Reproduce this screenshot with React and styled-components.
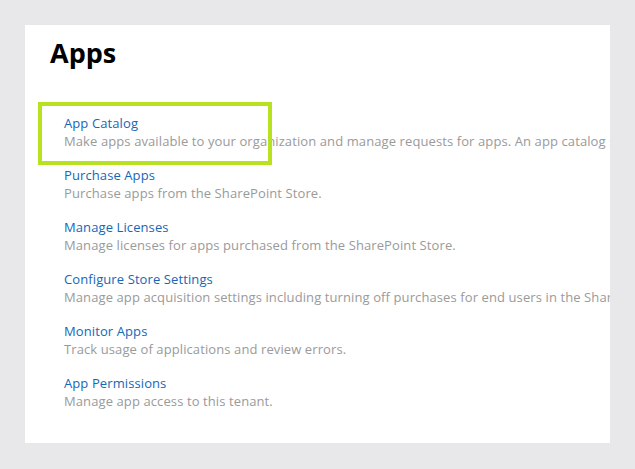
import { createGlobalStyle, styled } from "styled-components";

const Global = createGlobalStyle`
  body { margin: 0; background: #e8e8ea; font-family: "Open Sans", "Liberation Sans", sans-serif; }
`;

const Page = styled.div`
  padding: 25px 25px 26px 25px;
  height: 469px;
  box-sizing: border-box;
`;

const Panel = styled.div`
  position: relative;
  background: #fff;
  height: 418px;
  overflow: hidden;
  padding: 8px 0 0 25px;
  box-sizing: border-box;
`;

const Title = styled.h1`
  margin: 0;
  font-family: "Open Sans", sans-serif;
  font-weight: 700;
  font-size: 27px;
  line-height: 40px;
  color: #000;
`;

const List = styled.div`
  display: flex;
  flex-direction: column;
  gap: 16px;
  margin: 41px 0 0 14px;
`;

const Item = styled.div`
  display: flex;
  flex-direction: column;
  white-space: nowrap;
  font-size: 13px;
  line-height: 18px;
  letter-spacing: 0.1px;
`;

const ItemLink = styled.a`
  color: #1467b8;
  text-decoration: none;
`;

const Desc = styled.span`
  color: #9a9a9a;
`;

const Highlight = styled.div`
  position: absolute;
  left: 13px;
  top: 77px;
  width: 226px;
  height: 55px;
  border: 4px solid #b8e11f;
`;

const items = [
  ["App Catalog", "Make apps available to your organization and manage requests for apps. An app catalog site is used to distribute apps."],
  ["Purchase Apps", "Purchase apps from the SharePoint Store."],
  ["Manage Licenses", "Manage licenses for apps purchased from the SharePoint Store."],
  ["Configure Store Settings", "Manage app acquisition settings including turning off purchases for end users in the SharePoint Store."],
  ["Monitor Apps", "Track usage of applications and review errors."],
  ["App Permissions", "Manage app access to this tenant."],
];

export default function App() {
  return (
    <Page>
      <Global />
      <Panel>
        <Title>Apps</Title>
        <List>
          {items.map(([t, d]) => (
            <Item key={t}>
              <ItemLink href="#">{t}</ItemLink>
              <Desc>{d}</Desc>
            </Item>
          ))}
        </List>
        <Highlight />
      </Panel>
    </Page>
  );
}
